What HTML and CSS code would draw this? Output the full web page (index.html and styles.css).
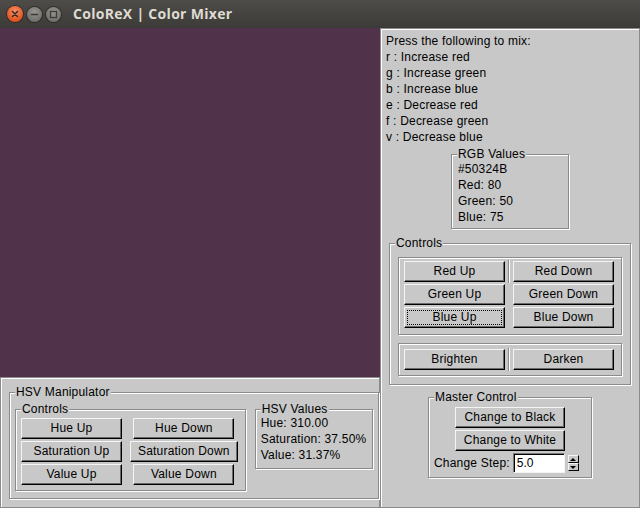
FILE: index.html
```html
<!DOCTYPE html>
<html>
<head>
<meta charset="utf-8">
<title>ColoReX | Color Mixer</title>
<link rel="stylesheet" href="styles.css">
</head>
<body>
<div class="window">
  <header class="titlebar">
    <div class="wbtns">
      <span class="wb close"><svg width="16" height="16" viewBox="0 0 16 16"><path d="M5.5 5.5 L10.5 10.5 M10.5 5.5 L5.5 10.5" stroke="#3a2a22" stroke-width="1.6" stroke-linecap="round"/></svg></span>
      <span class="wb min"><svg width="15" height="15" viewBox="0 0 15 15"><path d="M4.5 7.5 H10.5" stroke="#3c3b37" stroke-width="1.6" stroke-linecap="round"/></svg></span>
      <span class="wb max"><svg width="15" height="15" viewBox="0 0 15 15"><rect x="4.5" y="4.5" width="6" height="6" fill="none" stroke="#3c3b37" stroke-width="1.3"/></svg></span>
    </div>
    <div class="title">ColoReX | Color Mixer</div>
  </header>
  <div class="main">
    <div class="leftcol">
      <div class="canvas"></div>
      <div class="panel hsvpanel">
        <div class="lf hsvman">
          <span class="lt">HSV Manipulator</span>
          <div class="hsvrow">
            <div class="lf hsvctl">
              <span class="lt">Controls</span>
              <div class="btngrid">
                <button class="btn">Hue Up</button>
                <button class="btn">Hue Down</button>
                <button class="btn">Saturation Up</button>
                <button class="btn">Saturation Down</button>
                <button class="btn">Value Up</button>
                <button class="btn">Value Down</button>
              </div>
            </div>
            <div class="lf hsvvals">
              <span class="lt">HSV Values</span>
              <div>Hue: 310.00</div>
              <div>Saturation: 37.50%</div>
              <div>Value: 31.37%</div>
            </div>
          </div>
        </div>
      </div>
    </div>
    <div class="panel rightpanel">
      <div class="help">
        <div>Press the following to mix:</div>
        <div>r : Increase red</div>
        <div>g : Increase green</div>
        <div>b : Increase blue</div>
        <div>e : Decrease red</div>
        <div>f : Decrease green</div>
        <div>v : Decrease blue</div>
      </div>
      <div class="lf rgbvals">
        <span class="lt">RGB Values</span>
        <div>#50324B</div>
        <div>Red: 80</div>
        <div>Green: 50</div>
        <div>Blue: 75</div>
      </div>
      <div class="lf ctl">
        <span class="lt">Controls</span>
        <div class="sub sub1">
          <div class="pairgrid">
            <button class="btn c1">Red Up</button>
            <div class="sep"></div>
            <button class="btn c3">Red Down</button>
            <button class="btn c1">Green Up</button>
            <button class="btn c3">Green Down</button>
            <button class="btn c1 focus">Blue Up</button>
            <button class="btn c3">Blue Down</button>
          </div>
        </div>
        <div class="sub sub2">
          <div class="pairgrid">
            <button class="btn c1">Brighten</button>
            <div class="sep"></div>
            <button class="btn c3">Darken</button>
          </div>
        </div>
      </div>
      <div class="lf master">
        <span class="lt">Master Control</span>
        <button class="btn mbtn">Change to Black</button>
        <button class="btn mbtn">Change to White</button>
        <div class="steprow">
          <span class="steplabel">Change Step:</span>
          <input class="entry" type="text" value="5.0">
          <div class="spin">
            <span class="arrow up"></span>
            <span class="arrow down"></span>
          </div>
        </div>
      </div>
    </div>
  </div>
</div>
</body>
</html>
```
FILE: styles.css
```css
* { box-sizing: border-box; margin: 0; padding: 0; }
html, body { width: 640px; height: 508px; overflow: hidden; }
body {
  background: #c8c8c8;
  font-family: "Liberation Sans", Arial, sans-serif;
  font-size: 12px;
  line-height: 16px;
  letter-spacing: 0.2px;
  color: #000;
}
.window { display: grid; grid-template-rows: 28px 480px; height: 508px; }

/* title bar */
.titlebar {
  display: flex;
  align-items: center;
  background: linear-gradient(#4d4c48, #3c3b37);
  padding-left: 7px;
}
.wbtns { display: flex; align-items: center; gap: 4px; }
.wb { display: flex; align-items: center; justify-content: center; border-radius: 50%; }
.wb svg { display: block; }
.close {
  width: 16px; height: 16px;
  background: radial-gradient(circle at 50% 35%, #f7916a, #e2531f 70%, #c7461a);
  box-shadow: 0 0 0 1px rgba(30,20,15,0.5);
}
.min, .max {
  width: 15px; height: 15px;
  background: radial-gradient(circle at 50% 35%, #97958f, #74726d 70%, #5f5d58);
  box-shadow: 0 0 0 1px rgba(20,20,20,0.45);
}
.title {
  margin-left: 12px;
  font-family: "Open Sans", "DejaVu Sans", sans-serif;
  font-weight: 700;
  font-size: 14px;
  letter-spacing: 0.3px;
  color: #dfdbd2;
  line-height: 20px;
}

/* main */
.main { display: grid; grid-template-columns: 380px 260px; height: 480px; }
.leftcol { display: flex; flex-direction: column; }
.canvas { height: 349px; background: #50324B; }

.panel {
  border: 1px solid #8b8b8b;
  box-shadow: inset 1px 1px 0 #fff;
}

/* label frames */
.lf {
  position: relative;
  border: 1px solid #8b8b8b;
  box-shadow: inset 1px 1px 0 #fff, 1px 1px 0 #fff;
}
.lt {
  position: absolute;
  top: -8px;
  left: 5px;
  padding: 0 1px;
  background: #c8c8c8;
  line-height: 14px;
  white-space: nowrap;
}

/* buttons */
.btn {
  font: inherit;
  letter-spacing: 0.2px;
  color: #000;
  height: 21px;
  min-width: 101px;
  padding: 0 7px;
  line-height: 19px;
  background: #c8c8c8;
  border: 1px solid;
  border-color: #f4f4f4 #000 #000 #f4f4f4;
  box-shadow: inset -1px -1px 0 #6a6a6a;
  white-space: nowrap;
}
.btn.focus { outline: 1px dotted #000; outline-offset: -4px; }

/* HSV bottom panel */
.hsvpanel { height: 131px; padding: 14px 0 0 8px; }
.hsvman { padding: 16px 0 7px 5px; }
.hsvrow { display: flex; align-items: flex-start; gap: 9px; }
.hsvctl { padding: 8px 7px 5px 5px; }
.btngrid {
  display: grid;
  grid-template-columns: auto auto;
  column-gap: 8px;
  row-gap: 2px;
  justify-items: center;
}
.hsvvals { width: 118px; padding: 5px 0 5px 5px; white-space: nowrap; }

/* right panel */
.rightpanel { padding: 4px 5px 0 5px; }
.help { white-space: nowrap; }
.rgbvals { width: 118px; margin: 9px auto 0; padding: 6px 0 3px 6px; }
.ctl { margin: 14px 3px 0; padding: 13px 8px 8px 8px; }
.sub {
  border: 1px solid #8b8b8b;
  box-shadow: inset 1px 1px 0 #fff, 1px 1px 0 #fff;
}
.sub1 { padding: 3px 7px 6px 5px; }
.sub2 { margin-top: 8px; padding: 5px 7px 5px 5px; }
.pairgrid {
  display: grid;
  grid-template-columns: 101px 8px 101px;
  row-gap: 2px;
}
.pairgrid .c1 { grid-column: 1; }
.pairgrid .c3 { grid-column: 3; }
.sep {
  grid-column: 2;
  grid-row: 1 / -1;
  justify-self: center;
  width: 2px;
  margin: -1px 0;
  border-left: 1px solid #8b8b8b;
  border-right: 1px solid #fff;
}
.sub2 .sep { grid-row: 1; }

.master { width: 164px; margin: 12px auto 0; padding: 9px 5px 4px 5px; }
.mbtn { display: block; width: 110px; margin: 0 auto 2px; }
.steprow { display: flex; align-items: center; margin-top: 1px; }
.steplabel { white-space: nowrap; }
.entry {
  width: 52px;
  height: 20px;
  margin-left: 3px;
  padding: 0 0 0 3px;
  font: inherit;
  color: #000;
  background: #fff;
  border: 1px solid;
  border-color: #7a7a7a #f4f4f4 #f4f4f4 #7a7a7a;
  box-shadow: inset 1px 1px 0 #000;
  outline: none;
}
.spin {
  display: flex;
  flex-direction: column;
  margin-left: 3px;
  width: 11px;
}
.arrow {
  height: 8px;
  background: #c8c8c8;
  border: 1px solid;
  border-color: #f4f4f4 #000 #000 #f4f4f4;
  display: flex;
  align-items: center;
  justify-content: center;
}
.arrow::after {
  content: "";
  width: 0; height: 0;
  border-left: 3px solid transparent;
  border-right: 3px solid transparent;
}
.arrow.up::after { border-bottom: 3px solid #000; }
.arrow.down::after { border-top: 3px solid #000; }
```
